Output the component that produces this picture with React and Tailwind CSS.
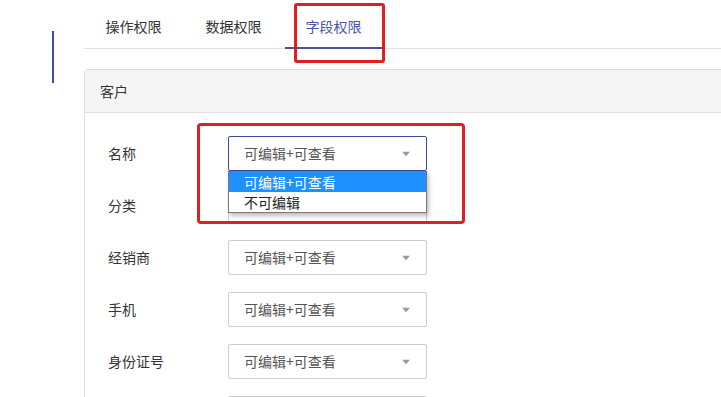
import React from 'react'

const tabs = ['操作权限', '数据权限', '字段权限']
const fields = ['名称', '分类', '经销商', '手机', '身份证号', '地址']

function Arrow() {
  return (
    <svg width="8" height="5" viewBox="0 0 8 5" className="absolute right-[16px] top-1/2 -translate-y-1/2">
      <path d="M0 0h8L4 5z" fill="#999" />
    </svg>
  )
}

function FieldSelect({ open }) {
  return (
    <div className="relative">
      <div
        className={`relative w-[199px] h-[35px] border rounded-[2px] bg-white pl-[15px] flex items-center text-[14px] text-[#555] ${
          open ? 'border-[#3d4b9c]' : 'border-[#ccc]'
        }`}
      >
        可编辑+可查看
        <Arrow />
      </div>
      {open && (
        <div className="absolute left-0 top-[35px] w-[199px] bg-white border border-[#767676] shadow-[2px_3px_4px_rgba(0,0,0,0.25)] z-10 text-[14px]">
          <div className="h-[20px] bg-[#1e90ff] text-white pl-[15px] leading-[20px]">可编辑+可查看</div>
          <div className="h-[20px] text-[#222] pl-[15px] leading-[20px]">不可编辑</div>
        </div>
      )}
    </div>
  )
}

export default function App() {
  return (
    <div className="w-[721px] h-[397px] overflow-hidden bg-white flex font-['Noto_Sans_CJK_SC','Microsoft_YaHei',sans-serif]">
      <div className="w-[84px] shrink-0 pt-[31px] pl-[52px]">
        <div className="w-[2px] h-[52px] bg-[#3f4ea8]" />
      </div>

      <div className="flex-1 flex flex-col">
        <div className="h-[49px] border-b border-[#e2e2e2] flex gap-[3px] pl-[1px] shrink-0 relative">
          {tabs.map((t, i) => (
            <div
              key={t}
              className={`relative w-[97px] flex items-center justify-center pt-[4px] text-[14px] ${
                i === 2 ? 'text-[#4b55a0]' : 'text-[#333]'
              }`}
            >
              {t}
              {i === 2 && <div className="absolute left-0 right-0 bottom-[-1px] h-[2px] bg-[#4b5298]" />}
              {i === 2 && (
                <div className="absolute left-[9px] top-[3px] w-[91px] h-[60px] border-[3px] border-[#e02020] rounded-[3px] z-20" />
              )}
            </div>
          ))}
        </div>

        <div className="mt-[20px] flex-1 border-l border-t border-[#ddd] rounded-tl-[4px]">
          <div className="h-[43px] bg-[#f5f5f5] border-b border-[#ddd] flex items-center pl-[15px] text-[14px] text-[#333]">
            客户
          </div>
          <div className="pl-[23px] pt-[23px] flex flex-col gap-[17px] relative">
            <div className="absolute left-[112px] top-[10px] w-[268px] h-[101px] border-[3px] border-[#e02020] rounded-[4px] z-20" />
            {fields.map((f, i) => (
              <div key={f} className="flex items-center">
                <div className="w-[120px] text-[14px] text-[#333]">{f}</div>
                <FieldSelect open={i === 0} />
              </div>
            ))}
          </div>
        </div>
      </div>
    </div>
  )
}
